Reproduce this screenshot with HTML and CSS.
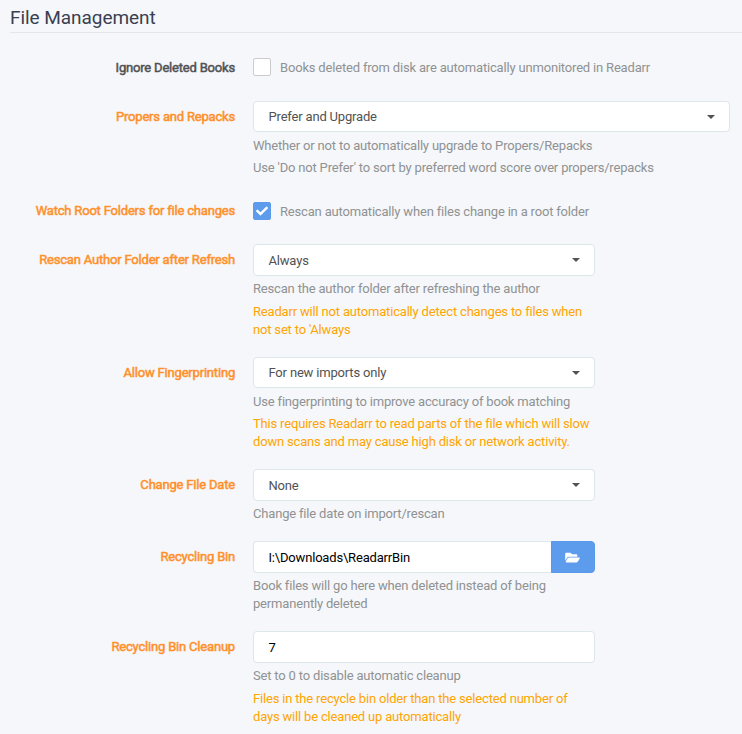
FILE: index.html
```html
<!DOCTYPE html>
<html lang="en">
<head><meta charset="utf-8"><title>File Management</title><link rel="stylesheet" href="styles.css"></head>
<body>
<fieldset class="section">
<legend class="legend">File Management</legend>
<div class="group check-group ignore">
  <div class="label basic">Ignore Deleted Books</div>
  <div class="field wide"><div class="check-row"><span class="checkbox"></span><span class="check-help">Books deleted from disk are automatically unmonitored in Readarr</span></div></div>
</div>
<div class="group propers">
  <div class="label">Propers and Repacks</div>
  <div class="field wide"><div class="input select"><span>Prefer and Upgrade</span><i class="caret"></i></div><p class="help">Whether or not to automatically upgrade to Propers/Repacks</p><p class="help second">Use 'Do not Prefer' to sort by preferred word score over propers/repacks</p></div>
</div>
<div class="group check-group watch">
  <div class="label">Watch Root Folders for file changes</div>
  <div class="field wide"><div class="check-row"><span class="checkbox checked"><svg viewBox="0 0 512 512" width="12" height="12"><path fill="#fff" d="M173.900 439.400L7.500 273c-10-10-10-26.200 0-36.200l36.200-36.200c10-10 26.200-10 36.200 0L192 312.700 432.100 72.600c10-10 26.200-10 36.200 0l36.200 36.200c10 10 10 26.200 0 36.200L210.100 439.400c-10 10-26.200 10-36.200 0z"/></svg></span><span class="check-help">Rescan automatically when files change in a root folder</span></div></div>
</div>
<div class="group rescan">
  <div class="label">Rescan Author Folder after Refresh</div>
  <div class="field"><div class="input select"><span>Always</span><i class="caret"></i></div><p class="help">Rescan the author folder after refreshing the author</p><p class="help warning">Readarr will not automatically detect changes to files when<br>not set to 'Always</p></div>
</div>
<div class="group finger">
  <div class="label">Allow Fingerprinting</div>
  <div class="field"><div class="input select"><span>For new imports only</span><i class="caret"></i></div><p class="help">Use fingerprinting to improve accuracy of book matching</p><p class="help warning">This requires Readarr to read parts of the file which will slow<br>down scans and may cause high disk or network activity.</p></div>
</div>
<div class="group date">
  <div class="label">Change File Date</div>
  <div class="field"><div class="input select"><span>None</span><i class="caret"></i></div><p class="help">Change file date on import/rescan</p></div>
</div>
<div class="group bin">
  <div class="label">Recycling Bin</div>
  <div class="field"><div class="path"><div class="input typed"><span>I:\Downloads\ReadarrBin</span></div><button class="browse" aria-label="Browse"><svg viewBox="0 0 576 512" width="15" height="13"><path fill="#fff" d="M572.700 292.100L500.300 416.200A64 64 0 0 1 445 448H45c-18.500 0-30.100-20.100-20.700-36.100l72.400-124.100A64 64 0 0 1 152 256h400c18.500 0 30.100 20.100 20.700 36.100zM152 224h328v-48c0-26.500-21.500-48-48-48H272l-64-64H48C21.500 64 0 85.500 0 112v278.100l69.100-118.400C86.200 242.300 118 224 152 224z"/></svg></button></div><p class="help">Book files will go here when deleted instead of being<br>permanently deleted</p></div>
</div>
<div class="group cleanup">
  <div class="label">Recycling Bin Cleanup</div>
  <div class="field"><div class="input typed"><span>7</span></div><p class="help">Set to 0 to disable automatic cleanup</p><p class="help warning">Files in the recycle bin older than the selected number of<br>days will be cleaned up automatically</p></div>
</div>
</fieldset>
</body>
</html>
```
FILE: styles.css
```css
* { box-sizing: border-box; }
body { margin: 0; height: 734px; overflow: hidden; background: #f5f7fa; color: #515253; font: 13px/18px Roboto, sans-serif; letter-spacing: -0.18px; }
.section { margin: 0; padding: 0 0 0 10px; border: 0; min-width: 0; }
.legend { display: block; width: 100%; height: 33px; padding: 0; border-bottom: 1px solid #e5e5e5; margin-bottom: 19px; font-size: 19px; line-height: 36px; letter-spacing: -0.05px; color: #3a3f51; }
.group { display: flex; height: 113px; }
.check-group { height: 49px; }
.propers { height: 94px; }
.finger { height: 112px; }
.date { height: 72px; }
.bin { height: 90px; }
.label { width: 225px; margin-right: 18px; padding-top: 7px; text-align: right; color: #ff902b; letter-spacing: -0.19px; -webkit-text-stroke: 0.5px currentColor; white-space: nowrap; }
.basic { color: #515253; }
.field { width: 342px; white-space: nowrap; }
.wide { width: 477px; }
.input { display: flex; align-items: center; width: 100%; height: 32px; padding: 1px 15px 0 14.5px; border: 1px solid #dde6e9; border-radius: 4px; background: #fff; color: #515253; }
.select { justify-content: space-between; padding-right: 14px; }
.propers .input, .finger .input { height: 31px; padding-top: 0; }
.typed { color: #000; }
.caret { width: 8px; height: 4px; margin-bottom: 1px; background: #515253; clip-path: polygon(0 0, 100% 0, 50% 100%); }
.propers .caret, .finger .caret { margin: 1px 0 0; }
.help { margin: 4px 0 0; color: #909293; line-height: 18px; }
.propers .help, .finger .help, .help.warning { margin-top: 5px; }
.propers .second, .finger .warning.help { margin-top: 4px; }
.help.warning { color: #ffa500; }
.check-row { display: flex; height: 31px; align-items: center; }
.ignore .check-row { height: 30px; }
.checkbox { display: flex; flex-shrink: 0; justify-content: center; align-items: center; width: 18px; height: 18px; margin-right: 9px; border: 1px solid #ccc; border-radius: 2px; background: #fff; }
.checked { border-color: #5d9cec; background: #5d9cec; }
.check-help { color: #909293; padding-top: 1px; }
.watch .check-help { padding-top: 2px; }
.path { display: flex; }
.path .input { width: 298px; border-radius: 4px 0 0 4px; border-right: 0; }
.browse { display: flex; align-items: center; justify-content: center; width: 44px; height: 32px; padding: 0 1px 0 0; border: 1px solid #5899eb; border-radius: 0 4px 4px 0; background: #5d9cec; }
```
